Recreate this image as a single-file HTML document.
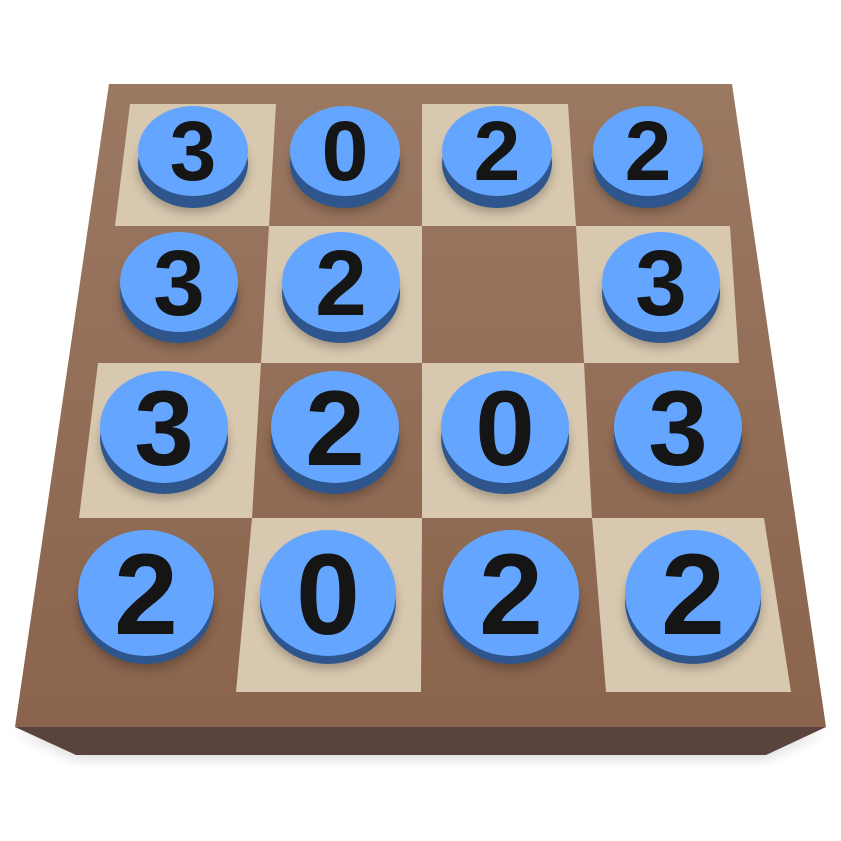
<!DOCTYPE html>
<html><head><meta charset="utf-8"><style>
html,body{margin:0;padding:0;background:#fff;width:841px;height:841px;overflow:hidden}
svg{display:block}
text{font-family:"Liberation Sans",sans-serif;font-weight:bold;fill:#151515;text-anchor:middle}
</style></head><body>
<svg width="841" height="841" viewBox="0 0 841 841">
<defs>
<linearGradient id="top" x1="0" y1="0" x2="0" y2="1"><stop offset="0" stop-color="#9b7862"/><stop offset="1" stop-color="#8a644d"/></linearGradient>
<filter id="sh" x="-30%" y="-30%" width="160%" height="160%"><feGaussianBlur stdDeviation="5"/></filter>
<filter id="bs" x="-10%" y="-10%" width="120%" height="130%"><feGaussianBlur stdDeviation="6"/></filter>
</defs>
<polygon points="15,732 76,760 766,760 826,732" fill="#000" opacity="0.12" filter="url(#bs)"/>
<polygon points="15,727 826,727 766,755 76,755" fill="#5b433d"/>
<polygon points="109,84 732,84 826,727 15,727" fill="url(#top)"/>
<g id="tiles"></g>
<!-- tiles -->
<g fill="#d8c8af">
<polygon points="130,104 276,104 269,226 115,226"/>
<polygon points="422,104 568,104 576,226 422,226"/>
<polygon points="269,226 422,226 422,363 261,363"/>
<polygon points="576,226 730,226 739,363 584,363"/>
<polygon points="98,363 261,363 252,518 79,518"/>
<polygon points="422,363 584,363 592,518 422,518"/>
<polygon points="252,518 422,518 421,692 236,692"/>
<polygon points="592,518 764,518 791,692 606,692"/>
</g>
<g id="p"></g>
<!-- pieces -->
<g>
<ellipse cx="193" cy="168" rx="55" ry="45" fill="#000" opacity="0.25" filter="url(#sh)"/>
<ellipse cx="345" cy="168" rx="55" ry="45" fill="#000" opacity="0.25" filter="url(#sh)"/>
<ellipse cx="497" cy="168" rx="55" ry="45" fill="#000" opacity="0.25" filter="url(#sh)"/>
<ellipse cx="648" cy="168" rx="55" ry="45" fill="#000" opacity="0.25" filter="url(#sh)"/>
<ellipse cx="179" cy="298" rx="59" ry="50" fill="#000" opacity="0.25" filter="url(#sh)"/>
<ellipse cx="341" cy="298" rx="59" ry="50" fill="#000" opacity="0.25" filter="url(#sh)"/>
<ellipse cx="661" cy="298" rx="59" ry="50" fill="#000" opacity="0.25" filter="url(#sh)"/>
<ellipse cx="164" cy="443" rx="64" ry="56" fill="#000" opacity="0.25" filter="url(#sh)"/>
<ellipse cx="335" cy="443" rx="64" ry="56" fill="#000" opacity="0.25" filter="url(#sh)"/>
<ellipse cx="505" cy="443" rx="64" ry="56" fill="#000" opacity="0.25" filter="url(#sh)"/>
<ellipse cx="678" cy="443" rx="64" ry="56" fill="#000" opacity="0.25" filter="url(#sh)"/>
<ellipse cx="146" cy="606" rx="68" ry="63" fill="#000" opacity="0.25" filter="url(#sh)"/>
<ellipse cx="328" cy="606" rx="68" ry="63" fill="#000" opacity="0.25" filter="url(#sh)"/>
<ellipse cx="511" cy="606" rx="68" ry="63" fill="#000" opacity="0.25" filter="url(#sh)"/>
<ellipse cx="693" cy="606" rx="68" ry="63" fill="#000" opacity="0.25" filter="url(#sh)"/>
</g>
<g fill="#2f568c">
<ellipse cx="193" cy="163" rx="55" ry="45"/><ellipse cx="345" cy="163" rx="55" ry="45"/><ellipse cx="497" cy="163" rx="55" ry="45"/><ellipse cx="648" cy="163" rx="55" ry="45"/>
<ellipse cx="179" cy="293" rx="59" ry="50"/><ellipse cx="341" cy="293" rx="59" ry="50"/><ellipse cx="661" cy="293" rx="59" ry="50"/>
<ellipse cx="164" cy="438" rx="64" ry="56"/><ellipse cx="335" cy="438" rx="64" ry="56"/><ellipse cx="505" cy="438" rx="64" ry="56"/><ellipse cx="678" cy="438" rx="64" ry="56"/>
<ellipse cx="146" cy="601" rx="68" ry="63"/><ellipse cx="328" cy="601" rx="68" ry="63"/><ellipse cx="511" cy="601" rx="68" ry="63"/><ellipse cx="693" cy="601" rx="68" ry="63"/>
</g>
<g fill="#64a6ff">
<ellipse cx="193" cy="151" rx="55" ry="45"/><ellipse cx="345" cy="151" rx="55" ry="45"/><ellipse cx="497" cy="151" rx="55" ry="45"/><ellipse cx="648" cy="151" rx="55" ry="45"/>
<ellipse cx="179" cy="282" rx="59" ry="50"/><ellipse cx="341" cy="282" rx="59" ry="50"/><ellipse cx="661" cy="282" rx="59" ry="50"/>
<ellipse cx="164" cy="427" rx="64" ry="56"/><ellipse cx="335" cy="427" rx="64" ry="56"/><ellipse cx="505" cy="427" rx="64" ry="56"/><ellipse cx="678" cy="427" rx="64" ry="56"/>
<ellipse cx="146" cy="593" rx="68" ry="63"/><ellipse cx="328" cy="593" rx="68" ry="63"/><ellipse cx="511" cy="593" rx="68" ry="63"/><ellipse cx="693" cy="593" rx="68" ry="63"/>
</g>
<g font-size="84">
<text x="193" y="180">3</text><text x="345" y="180">0</text><text x="497" y="180">2</text><text x="648" y="180">2</text>
</g>
<g font-size="93">
<text x="179" y="315">3</text><text x="341" y="315">2</text><text x="661" y="315">3</text>
</g>
<g font-size="107">
<text x="164" y="465">3</text><text x="335" y="465">2</text><text x="505" y="465">0</text><text x="678" y="465">3</text>
</g>
<g font-size="115">
<text x="146" y="634">2</text><text x="328" y="634">0</text><text x="511" y="634">2</text><text x="693" y="634">2</text>
</g>
</svg>
</body></html>
